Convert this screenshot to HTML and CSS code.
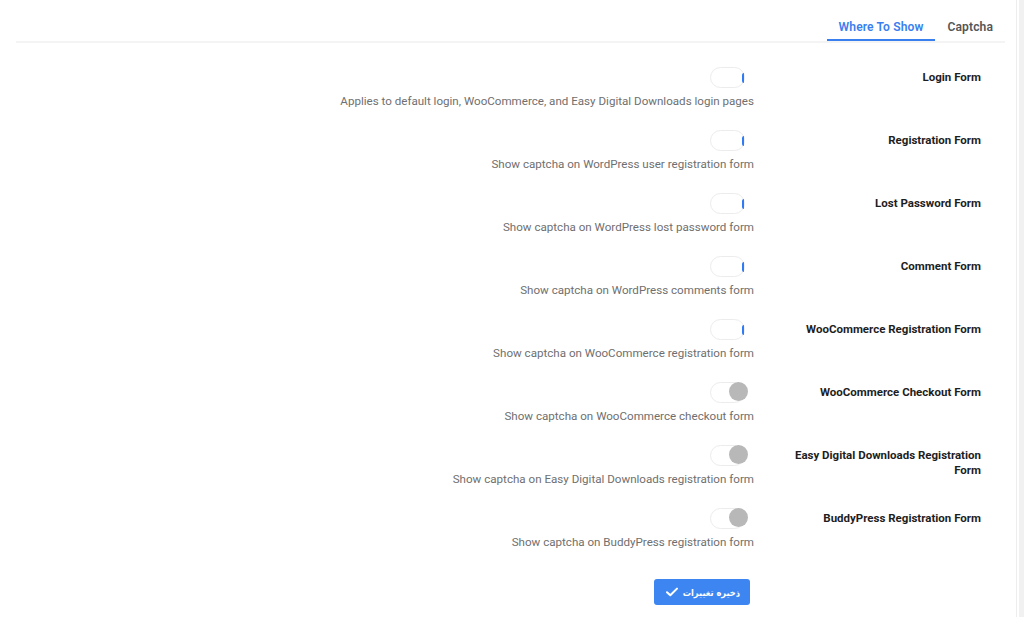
FILE: index.html
```html
<!DOCTYPE html>
<html lang="en">
<head>
<meta charset="utf-8">
<title>Captcha Settings</title>
<link rel="stylesheet" href="styles.css">
</head>
<body>
<div class="page">
  <main class="panel">
    <nav class="tabs">
      <a class="tab">Captcha</a>
      <a class="tab active">Where To Show</a>
    </nav>
    <section class="form">
      <div class="row">
        <div class="label">Login Form</div>
        <div class="field">
          <span class="toggle on"></span>
          <p class="desc">Applies to default login, WooCommerce, and Easy Digital Downloads login pages</p>
        </div>
      </div>
      <div class="row">
        <div class="label">Registration Form</div>
        <div class="field">
          <span class="toggle on"></span>
          <p class="desc">Show captcha on WordPress user registration form</p>
        </div>
      </div>
      <div class="row">
        <div class="label">Lost Password Form</div>
        <div class="field">
          <span class="toggle on"></span>
          <p class="desc">Show captcha on WordPress lost password form</p>
        </div>
      </div>
      <div class="row">
        <div class="label">Comment Form</div>
        <div class="field">
          <span class="toggle on"></span>
          <p class="desc">Show captcha on WordPress comments form</p>
        </div>
      </div>
      <div class="row">
        <div class="label">WooCommerce Registration Form</div>
        <div class="field">
          <span class="toggle on"></span>
          <p class="desc">Show captcha on WooCommerce registration form</p>
        </div>
      </div>
      <div class="row">
        <div class="label">WooCommerce Checkout Form</div>
        <div class="field">
          <span class="toggle off"></span>
          <p class="desc">Show captcha on WooCommerce checkout form</p>
        </div>
      </div>
      <div class="row">
        <div class="label">Easy Digital Downloads Registration Form</div>
        <div class="field">
          <span class="toggle off"></span>
          <p class="desc">Show captcha on Easy Digital Downloads registration form</p>
        </div>
      </div>
      <div class="row">
        <div class="label">BuddyPress Registration Form</div>
        <div class="field">
          <span class="toggle off"></span>
          <p class="desc">Show captcha on BuddyPress registration form</p>
        </div>
      </div>
    </section>
    <div class="actions">
      <button class="save" dir="rtl"><span>ذخیره تغییرات</span><svg class="check" width="12" height="10" viewBox="0 0 12 10"><path d="M1 5.2 L4.3 8.3 L11 1.6" fill="none" stroke="#fff" stroke-width="2" stroke-linecap="round" stroke-linejoin="round"/></svg></button>
    </div>
  </main>
  <div class="scrollbar"></div>
</div>
</body>
</html>
```

FILE: styles.css
```css
html, body {
  margin: 0;
  padding: 0;
  background: #ffffff;
}

body {
  font-family: Roboto, "Liberation Sans", Arial, sans-serif;
  color: #1d2327;
}

.page {
  display: flex;
  height: 617px;
}

.panel {
  flex: 1;
  padding: 0 11px 0 16px;
}

.scrollbar {
  width: 7px;
  border-left: 1px solid #ededed;
  background: linear-gradient(to right, #ffffff 0 2px, #f1f1f1 2px);
}

/* Tabs */
.tabs {
  display: flex;
  flex-direction: row-reverse;
  border-bottom: 2px solid #f4f4f4;
  height: 41px;
}

.tab {
  padding: 19px 12px 4px;
  font-size: 12.1px;
  line-height: 16px;
  font-weight: 600;
  color: #555555;
  border-bottom: 2px solid transparent;
  cursor: pointer;
  letter-spacing: 0.1px;
}

.tab.active {
  color: #3a7ff0;
  border-bottom-color: #3a7ff0;
}

/* Form rows */
.form {
  padding-top: 15px;
}

.row {
  display: flex;
  flex-direction: row-reverse;
  padding: 10px 0 11px;
  height: 42px;
}

.label {
  width: 200px;
  padding: 2px 24px 0 0;
  text-align: right;
  font-size: 11.5px;
  line-height: 15px;
  font-weight: 700;
  color: #1e1e1e;
}

.field {
  flex: 1;
  display: flex;
  flex-direction: column;
  align-items: flex-end;
  padding-right: 27px;
}

.toggle {
  position: relative;
  display: block;
  box-sizing: border-box;
  width: 35px;
  height: 21px;
  margin-right: 9px;
  margin-top: -1px;
  border: 1px solid #ececec;
  border-radius: 11px;
  background: #ffffff;
}

.toggle.on::after {
  content: "";
  position: absolute;
  right: 0;
  top: 5px;
  width: 2px;
  height: 10px;
  border-radius: 2px 0 0 2px;
  background: #2f7bf5;
}

.toggle.off::after {
  content: "";
  position: absolute;
  right: -4px;
  top: -1px;
  width: 19px;
  height: 19px;
  border-radius: 50%;
  background: #b8b8b8;
}

.desc {
  margin: 5px 0 0;
  font-size: 11.6px;
  line-height: 16px;
  color: #6f6f6f;
  text-align: right;
}

/* Actions */
.actions {
  display: flex;
  flex-direction: row-reverse;
  padding: 17px 255px 0 0;
}

.save {
  display: flex;
  align-items: center;
  gap: 5px;
  height: 26px;
  padding: 0 10px 0 12px;
  border: none;
  border-radius: 3px;
  background: #3d86f2;
  color: #ffffff;
  font-family: "DejaVu Sans Condensed", "DejaVu Sans", sans-serif;
  font-size: 9.2px;
  font-weight: 700;
  cursor: pointer;
}

.check {
  display: block;
}
```
